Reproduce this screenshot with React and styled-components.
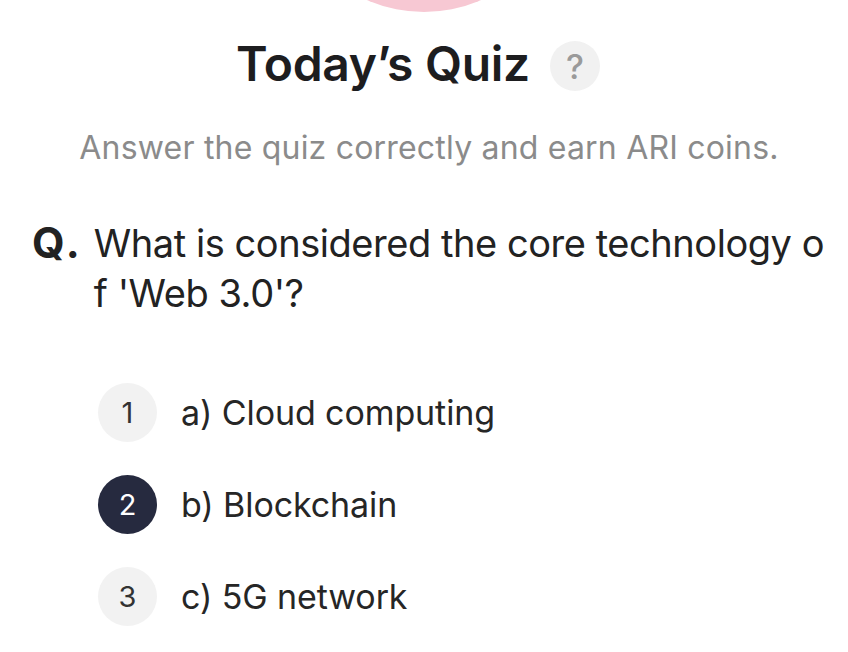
import styled, { createGlobalStyle } from "styled-components";

const GlobalStyle = createGlobalStyle`
  html, body {
    margin: 0;
    padding: 0;
    background: #ffffff;
  }
  body {
    font-family: Inter, "Noto Sans", "Liberation Sans", sans-serif;
    color: #1f1f1f;
  }
`;

const options = [
  { num: 1, label: "a) Cloud computing" },
  { num: 2, label: "b) Blockchain", selected: true },
  { num: 3, label: "c) 5G network" },
];

export default function App() {
  return (
    <>
      <GlobalStyle />
      <Page>
        <Blob />
        <TitleRow>
          <Title>Today’s Quiz</Title>
          <HelpBadge>?</HelpBadge>
        </TitleRow>
        <Subtitle>Answer the quiz correctly and earn ARI coins.</Subtitle>
        <Question>
          <QMark>Q.</QMark>
          <QText>What is considered the core technology of 'Web 3.0'?</QText>
        </Question>
        <OptionList>
          {options.map((opt) => (
            <OptionRow key={opt.num}>
              <NumBadge selected={opt.selected}>{opt.num}</NumBadge>
              <OptionLabel>{opt.label}</OptionLabel>
            </OptionRow>
          ))}
        </OptionList>
      </Page>
    </>
  );
}

const Page = styled.main`
  width: 848px;
  height: 652px;
  overflow: hidden;
  display: flex;
  flex-direction: column;
  align-items: center;
`;

const Blob = styled.div`
  width: 284px;
  height: 284px;
  margin-top: -272px;
  border-radius: 50%;
  background: #f7c8d3;
  flex-shrink: 0;
`;

const TitleRow = styled.div`
  display: flex;
  align-items: center;
  gap: 20px;
  padding-right: 12px;
  margin-top: 26px;
  height: 52px;
`;

const Title = styled.h1`
  margin: 0;
  font-size: 48px;
  font-weight: 600;
  letter-spacing: -0.3px;
  color: #1d1d1f;
  line-height: 52px;
`;

const HelpBadge = styled.span`
  width: 50px;
  height: 50px;
  border-radius: 50%;
  background: #f1f1f1;
  color: #9a9a9a;
  display: flex;
  align-items: center;
  justify-content: center;
  font-size: 34px;
  font-weight: 500;
  margin-top: 4px;
`;

const Subtitle = styled.p`
  margin: 39px 0 0;
  padding-left: 10px;
  font-size: 32px;
  line-height: 38px;
  color: #8b8b8b;
  letter-spacing: 0.2px;
  font-weight: 400;
`;

const Question = styled.div`
  align-self: stretch;
  display: flex;
  gap: 11px;
  padding: 0 23px 0 32px;
  margin-top: 51px;
`;

const QMark = styled.span`
  font-size: 42px;
  font-weight: 700;
  line-height: 50px;
  letter-spacing: 3px;
  color: #222;
  flex-shrink: 0;
`;

const QText = styled.p`
  margin: 0;
  font-size: 38px;
  line-height: 50px;
  color: #222;
  letter-spacing: -0.45px;
  word-break: break-all;
`;

const OptionList = styled.ul`
  align-self: stretch;
  list-style: none;
  margin: 65px 0 0;
  padding: 0 0 0 98px;
  display: flex;
  flex-direction: column;
  gap: 33px;
`;

const OptionRow = styled.li`
  display: flex;
  align-items: center;
  gap: 24px;
  height: 59px;
`;

const NumBadge = styled.span`
  width: 59px;
  height: 59px;
  border-radius: 50%;
  flex-shrink: 0;
  display: flex;
  align-items: center;
  justify-content: center;
  font-size: 29px;
  font-weight: 400;
  background: ${(p) => (p.selected ? "#262a3f" : "#f2f2f2")};
  color: ${(p) => (p.selected ? "#ffffff" : "#333333")};
`;

const OptionLabel = styled.span`
  font-size: 34px;
  color: #262626;
  letter-spacing: -0.1px;
`;
